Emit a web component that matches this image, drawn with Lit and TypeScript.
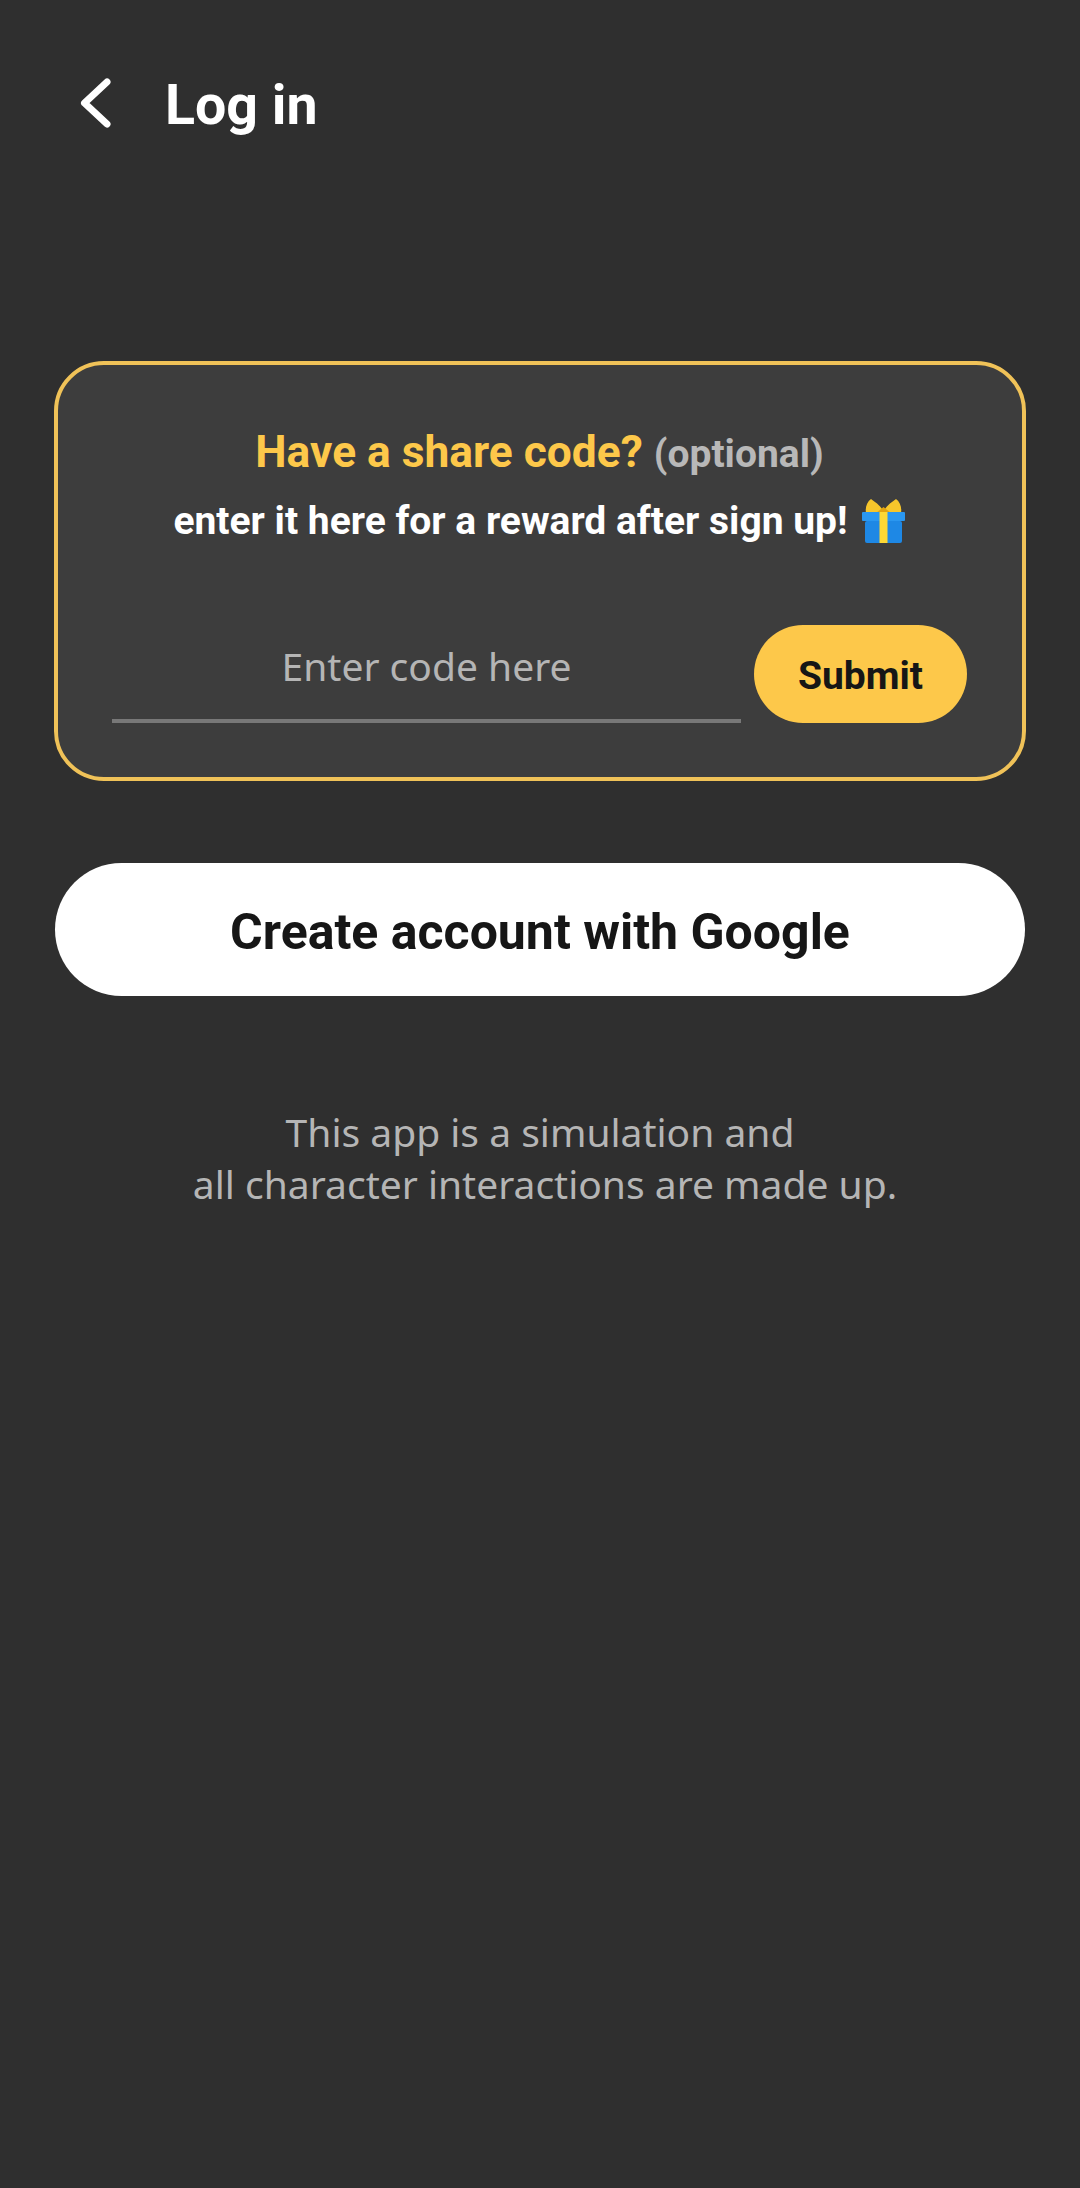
import { LitElement, html, css } from "lit";
import { customElement } from "lit/decorators.js";

@customElement("app-root")
export class AppRoot extends LitElement {
  static styles = css`
    :host { display: block; width: 1080px; height: 2188px; background: #2f2f2f; overflow: hidden; font-family: Roboto, sans-serif; }
    .page { display: flex; flex-direction: column; padding: 0 54px; }
    .header { display: flex; align-items: center; height: 82px; margin-top: 63px; padding-left: 25px; }
    .back { width: 32px; height: 52px; display: block; }
    .title { margin: 4px 0 0 54px; font-size: 55.5px; font-weight: 700; color: #fff; line-height: 78px; }
    .card { margin-top: 216px; box-sizing: border-box; height: 420px; border: 4px solid #f0c258; border-radius: 50px; background: #3d3d3d; display: flex; flex-direction: column; align-items: center; padding: 0 55px 0 54px; }
    .l1 { margin-top: 62px; height: 50px; line-height: 50px; font-size: 44.3px; font-weight: 700; color: #fdc84a; white-space: nowrap; }
    .l1 span { font-size: 39px; color: #b8b8b8; }
    .l2 { margin-top: 21px; height: 46px; line-height: 46px; font-size: 39px; font-weight: 700; color: #fff; white-space: nowrap; display: flex; align-items: center; gap: 14px; }
    .gift { width: 44px; height: 44px; display: block; flex: none; margin-top: -1px; }
    .row { margin-top: 81px; align-self: stretch; display: flex; align-items: flex-end; gap: 13px; }
    .input { flex: 1; height: 98px; box-sizing: border-box; border-bottom: 4px solid #787878; text-align: center; font-family: "Noto Sans", sans-serif; font-size: 39px; line-height: 81px; color: #b5b5b5; }
    .submit { width: 213px; height: 98px; box-sizing: border-box; border-radius: 49px; border: 0; padding: 4px 0 0; background: #fdc84a; color: #161616; font-family: Roboto, sans-serif; font-size: 39px; font-weight: 700; }
    .google { margin: 82px 1px 0; height: 133px; box-sizing: border-box; border-radius: 67px; border: 0; padding: 4px 0 0; background: #fff; color: #161616; font-family: Roboto, sans-serif; font-size: 50px; font-weight: 700; }
    .note { margin-top: 110px; text-align: center; font-family: "Noto Sans", sans-serif; font-size: 39px; line-height: 52px; color: #b5b5b5; }
    .note-wide { padding-left: 10px; }
  `;

  render() {
    return html`
      <div class="page">
        <div class="header">
          <svg class="back" viewBox="0 0 32 52" fill="none" stroke="#fff" stroke-width="7" stroke-linecap="round" stroke-linejoin="round"><path d="M28 4 L5.5 25 L28 46"/></svg>
          <div class="title">Log in</div>
        </div>
        <div class="card">
          <div class="l1">Have a share code? <span>(optional)</span></div>
          <div class="l2">enter it here for a reward after sign up!
            <svg class="gift" viewBox="0 0 44 44">
              <path d="M21.5 14 L4 14 C3 8 5 3 9 0 C13 3 18 6 21.5 12 Z" fill="#f7c62b"/>
              <path d="M21.5 14 L39 14 C40 8 38 3 34 0 C30 3 25 6 21.5 12 Z" fill="#f7c62b"/>
              <path d="M14 14 L21.5 8 L29 14 Z" fill="#e3a40f"/>
              <rect x="0" y="13" width="43" height="9" rx="1" fill="#2a97f0"/>
              <rect x="3" y="22" width="37" height="22" rx="2" fill="#1e88e5"/>
              <rect x="17.5" y="13" width="8" height="31" fill="#fdd835"/>
            </svg>
          </div>
          <div class="row">
            <div class="input">Enter code here</div>
            <button class="submit">Submit</button>
          </div>
        </div>
        <button class="google">Create account with Google</button>
        <div class="note">
          <div>This app is a simulation and</div>
          <div class="note-wide">all character interactions are made up.</div>
        </div>
      </div>
    `;
  }
}
